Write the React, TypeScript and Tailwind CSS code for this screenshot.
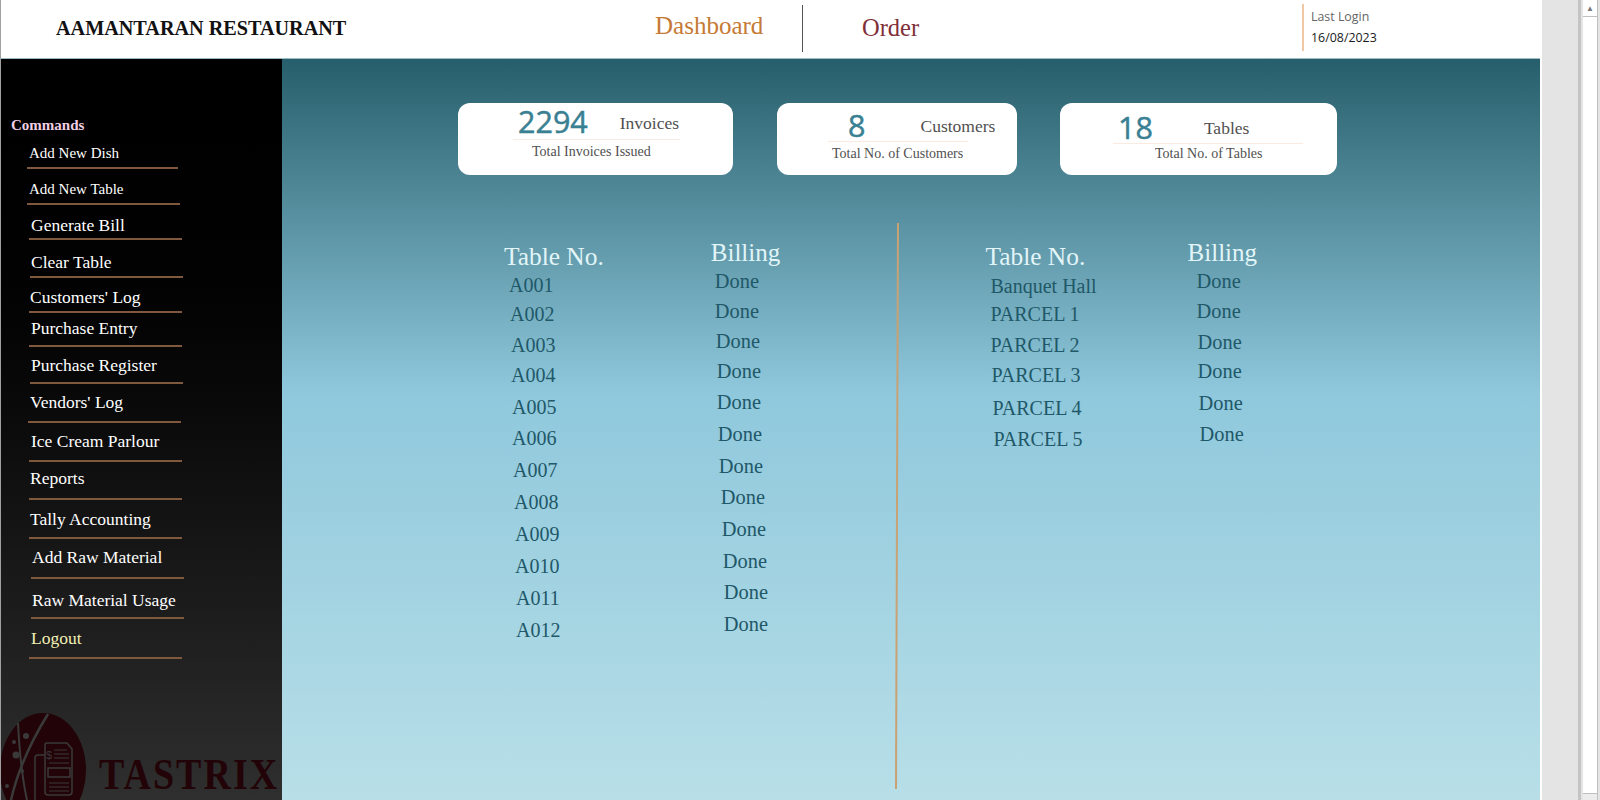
import { clsx } from "clsx";

const MENU = [
  { label: "Add New Dish", row: "h-[34px]", text: "text-[15px] ml-[28px]", rule: "ml-[26px] w-[151px] mt-[4px]" },
  { label: "Add New Table", row: "h-[36px]", text: "text-[15px] ml-[28px]", rule: "ml-[26px] w-[153px] mt-[4px]" },
  { label: "Generate Bill", row: "h-[35px]", text: "text-[17.5px] ml-[30px]", rule: "ml-[28px] w-[153px] mt-[3px]" },
  { label: "Clear Table", row: "h-[38px]", text: "text-[17.5px] ml-[30px]", rule: "ml-[29px] w-[153px] mt-[4px]" },
  { label: "Customers' Log", row: "h-[35px]", text: "text-[17.5px] ml-[29px]", rule: "ml-[28px] w-[153px] mt-[4px]" },
  { label: "Purchase Entry", row: "h-[34px]", text: "text-[17.5px] ml-[30px]", rule: "ml-[28px] w-[153px] mt-[7px]" },
  { label: "Purchase Register", row: "h-[37px]", text: "text-[17.5px] ml-[30px]", rule: "ml-[29px] w-[153px] mt-[7px]" },
  { label: "Vendors' Log", row: "h-[39px]", text: "text-[17.5px] ml-[29px]", rule: "ml-[27px] w-[153px] mt-[9px]" },
  { label: "Ice Cream Parlour", row: "h-[39px]", text: "text-[17.5px] ml-[30px]", rule: "ml-[28px] w-[153px] mt-[9px]" },
  { label: "Reports", row: "h-[38px]", text: "text-[17.5px] ml-[29px]", rule: "ml-[28px] w-[153px] mt-[10px]" },
  { label: "Tally Accounting", row: "h-[39px]", text: "text-[17.5px] ml-[29px]", rule: "ml-[28px] w-[153px] mt-[8px]" },
  { label: "Add Raw Material", row: "h-[40px]", text: "text-[17.5px] ml-[31px]", rule: "ml-[30px] w-[153px] mt-[10px]" },
  { label: "Raw Material Usage", row: "h-[40px]", text: "text-[17.5px] ml-[31px]", rule: "ml-[30px] w-[153px] mt-[7px]" },
  { label: "Logout", row: "h-[40px]", text: "text-[17.5px] ml-[30px] text-[#f2efb5]", rule: "ml-[28px] w-[153px] mt-[9px]" },
];

const STATS = [
  { value: "2294", name: "Invoices", caption: "Total Invoices Issued", card: "w-[275px] ml-[176px]", top: "h-[36px] pl-[60px]", label: "ml-[32px] mt-[9px]", rule: "ml-[55px] w-[167px]", cap: "ml-[74px] mt-[2px]" },
  { value: "8", name: "Customers", caption: "Total No. of Customers", card: "w-[240px] ml-[44px]", top: "h-[38px] pl-[71px] pt-[4px]", label: "ml-[55px] mt-[8px]", rule: "ml-[51px] w-[140px]", cap: "ml-[55px] mt-[2px]" },
  { value: "18", name: "Tables", caption: "Total No. of Tables", card: "w-[277px] ml-[43px]", top: "h-[40px] pl-[58px] pt-[6px]", label: "ml-[51px] mt-[8px]", rule: "ml-[53px] w-[190px]", cap: "ml-[95px]" },
];

const LEFT = [
  ["A001", "ml-[0px] mt-[1px] h-[29px]", "ml-[0px] -mt-[1px] h-[30px]"],
  ["A002", "ml-[1px] h-[31px]", "ml-[0px] h-[30px]"],
  ["A003", "ml-[2px] h-[30px]", "ml-[1px] h-[30px]"],
  ["A004", "ml-[2px] h-[32px]", "ml-[2px] h-[31px]"],
  ["A005", "ml-[3px] h-[31px]", "ml-[2px] h-[32px]"],
  ["A006", "ml-[3px] h-[32px]", "ml-[3px] h-[32px]"],
  ["A007", "ml-[4px] h-[32px]", "ml-[4px] h-[31px]"],
  ["A008", "ml-[5px] h-[32px]", "ml-[6px] h-[32px]"],
  ["A009", "ml-[6px] h-[32px]", "ml-[7px] h-[32px]"],
  ["A010", "ml-[6px] h-[32px]", "ml-[8px] h-[31px]"],
  ["A011", "ml-[7px] h-[32px]", "ml-[9px] h-[32px]"],
  ["A012", "ml-[7px] h-[32px]", "ml-[9px] h-[32px]"],
];

const RIGHT = [
  ["Banquet Hall", "ml-[0px] mt-[2px] h-[28px]", "ml-[5px] -mt-[1px] h-[30px]"],
  ["PARCEL 1", "ml-[0px] h-[31px]", "ml-[5px] h-[31px]"],
  ["PARCEL 2", "ml-[0px] h-[30px]", "ml-[6px] h-[29px]"],
  ["PARCEL 3", "ml-[1px] h-[33px]", "ml-[6px] h-[32px]"],
  ["PARCEL 4", "ml-[2px] h-[31px]", "ml-[7px] h-[31px]"],
  ["PARCEL 5", "ml-[3px] h-[30px]", "ml-[8px] h-[30px]"],
];

const SERIF = "font-['Liberation_Serif',serif]";
const CALIBRI_LIKE = "font-['Open_Sans','Liberation_Sans',sans-serif]";

function TastrixLogo() {
  return (
    <div className="mt-auto flex h-[87px] shrink-0 items-end overflow-hidden">
      <svg width="86" height="87" viewBox="0 0 86 87" className="shrink-0">
        <ellipse cx="42" cy="57" rx="43" ry="57" fill="#220307" />
        <path d="M47 1 C34 22 18 52 10 87" stroke="#3a3a3a" strokeWidth="2.5" fill="none" />
        <path d="M17 10 C18 30 20 60 26 87" stroke="#3a3a3a" strokeWidth="2" fill="none" />
        <circle cx="25" cy="23" r="3" fill="#3a3a3a" />
        <circle cx="15" cy="42" r="3.5" fill="#3a3a3a" />
        <circle cx="13" cy="29" r="2" fill="#3a3a3a" />
        <circle cx="6" cy="73" r="2" fill="#3a3a3a" />
        <circle cx="21" cy="58" r="2" fill="#3a3a3a" />
        <path d="M46 30 H66 L71 36 V79 Q71 82 68 82 H47 Q44 82 44 79 V32 Q44 30 46 30 Z" fill="none" stroke="#3a3a3a" strokeWidth="1.5" />
        <path d="M44 42 H37 Q34 42 34 45 V87" fill="none" stroke="#3a3a3a" strokeWidth="1.5" />
        <path d="M53 37 H66 M53 41 H68 M53 45 H68 M48 50 H68 M48 70 H68 M48 74 H68 M48 78 H68" stroke="#3a3a3a" strokeWidth="1.2" />
        <rect x="47" y="55" width="22" height="9" fill="none" stroke="#3a3a3a" strokeWidth="1.5" />
        <text x="45" y="46" fontSize="11" fill="#3a3a3a" fontFamily="Liberation Sans, sans-serif">$</text>
      </svg>
      <span className={clsx(SERIF, "mb-[9px] ml-[12px] origin-bottom scale-y-[1.15] text-[38px] font-bold leading-[30px] tracking-[2px] text-[#220307]")}>TASTRIX</span>
    </div>
  );
}

function Sidebar() {
  return (
    <aside className={clsx(SERIF, "flex h-full w-[281px] shrink-0 flex-col bg-gradient-to-b from-[#000000] to-[#2f2f2f] text-white")}>
      <div className="ml-[10px] mt-[56px] text-[15px] font-bold leading-[20px] text-[#f0cfe4]">Commands</div>
      <nav>
        {MENU.map((item) => (
          <div key={item.label} className={clsx("flex flex-col justify-end", item.row)}>
            <div className={clsx("leading-[20px]", item.text)}>{item.label}</div>
            <div className={clsx("h-[2px] shrink-0 bg-[#80583e]", item.rule)} />
          </div>
        ))}
      </nav>
      <TastrixLogo />
    </aside>
  );
}

function StatCard({ stat }: { stat: (typeof STATS)[number] }) {
  return (
    <div className={clsx("h-[72px] rounded-[12px] bg-white", stat.card)}>
      <div className={clsx("flex items-start", stat.top)}>
        <span className={clsx(CALIBRI_LIKE, "text-[30.5px] leading-[37px] text-[#3a8093] [-webkit-text-stroke:0.5px_#3a8093]")}>{stat.value}</span>
        <span className={clsx(SERIF, "text-[17.5px] leading-[22px] text-[#505050]", stat.label)}>{stat.name}</span>
      </div>
      <div className={clsx("h-px bg-[#fbeadf]", stat.rule)} />
      <div className={clsx(SERIF, "text-[14px] leading-[20px] text-[#505050]", stat.cap)}>{stat.caption}</div>
    </div>
  );
}

function BillingColumn({ rows, gapClass }: { rows: string[][]; gapClass: string }) {
  return (
    <div className={clsx(SERIF, "flex", gapClass)}>
      <div>
        <div className="h-[28px] text-[25.4px] leading-[31px] text-[#e2f5f8]">Table No.</div>
        {rows.map(([name, cls]) => (
          <div key={name} className={clsx("pl-[5px] text-[20px] leading-[30px] text-[#1f5868]", cls)}>{name}</div>
        ))}
      </div>
      <div className="-mt-[2px]">
        <div className="h-[28px] text-[25px] leading-[28px] text-[#e2f5f8]">Billing</div>
        {rows.map(([name, , cls]) => (
          <div key={name} className={clsx("pl-[4px] text-[20.4px] leading-[30px] text-[#1f5868]", cls)}>Done</div>
        ))}
      </div>
    </div>
  );
}

export default function App() {
  return (
    <div className="flex h-[800px] w-[1600px] overflow-hidden bg-[#e4e4e4]">
      <div className="flex h-full w-[1540px] shrink-0 flex-col border-l border-[#a0a0a0]">
        <header className="flex h-[59px] shrink-0 items-start border-b border-[#9fbcc4] bg-white">
          <div className={clsx(SERIF, "ml-[55px] mt-[16px] w-[599px] text-[20.2px] font-bold leading-[24px] text-[#111111]")}>AAMANTARAN RESTAURANT</div>
          <div className={clsx(SERIF, "mt-[12px] w-[147px] text-[25px] leading-[28px] text-[#c57a35]")}>Dashboard</div>
          <div className="mt-[5px] h-[47px] w-px bg-[#555555]" />
          <div className={clsx(SERIF, "ml-[59px] mt-[14px] w-[440px] text-[24.5px] leading-[28px] text-[#7f3038]")}>Order</div>
          <div className={clsx(CALIBRI_LIKE, "mt-[4px] h-[47px] border-l-2 border-[#f0c9a4] pl-[7px] text-[12.4px] leading-[21px]")}>
            <div className="mt-[2px] text-[#666666]">Last Login</div>
            <div className="text-[#1a1a1a]">16/08/2023</div>
          </div>
        </header>
        <div className="flex min-h-0 flex-1">
          <Sidebar />
          <main className="h-full flex-1 bg-[linear-gradient(to_bottom,#265e6b_0%,#8fc8dc_45%,#b8dfe8_100%)]">
            <div className="flex pt-[44px]">
              {STATS.map((stat) => (
                <StatCard key={stat.name} stat={stat} />
              ))}
            </div>
            <div className="mt-[48px] flex">
              <div className="ml-[222px] mt-[18px] w-[392px] shrink-0">
                <BillingColumn rows={LEFT} gapClass="gap-[107px]" />
              </div>
              <div className="h-[566px] w-[1.5px] shrink-0 rotate-[0.2deg] bg-[#c8a274]" />
              <div className="ml-[88px] mt-[18px]">
                <BillingColumn rows={RIGHT} gapClass="gap-[91px]" />
              </div>
            </div>
          </main>
        </div>
      </div>
      <div className="flex h-full flex-1 border-l-2 border-white">
        <div className="ml-[36px] flex h-full w-[22px] border-l-[3px] border-[#c4c4c4] pl-[2px]">
          <div className="flex h-full w-[15px] flex-col border-r border-[#c0c0c0] bg-white">
            <div className="flex h-[17px] items-center justify-center border-b border-[#c0c0c0] text-[8px] leading-none text-[#777777]">▲</div>
            <div className="flex-1" />
            <div className="h-[7px] border-t border-[#c0c0c0] bg-[#ececec]" />
          </div>
        </div>
      </div>
    </div>
  );
}
